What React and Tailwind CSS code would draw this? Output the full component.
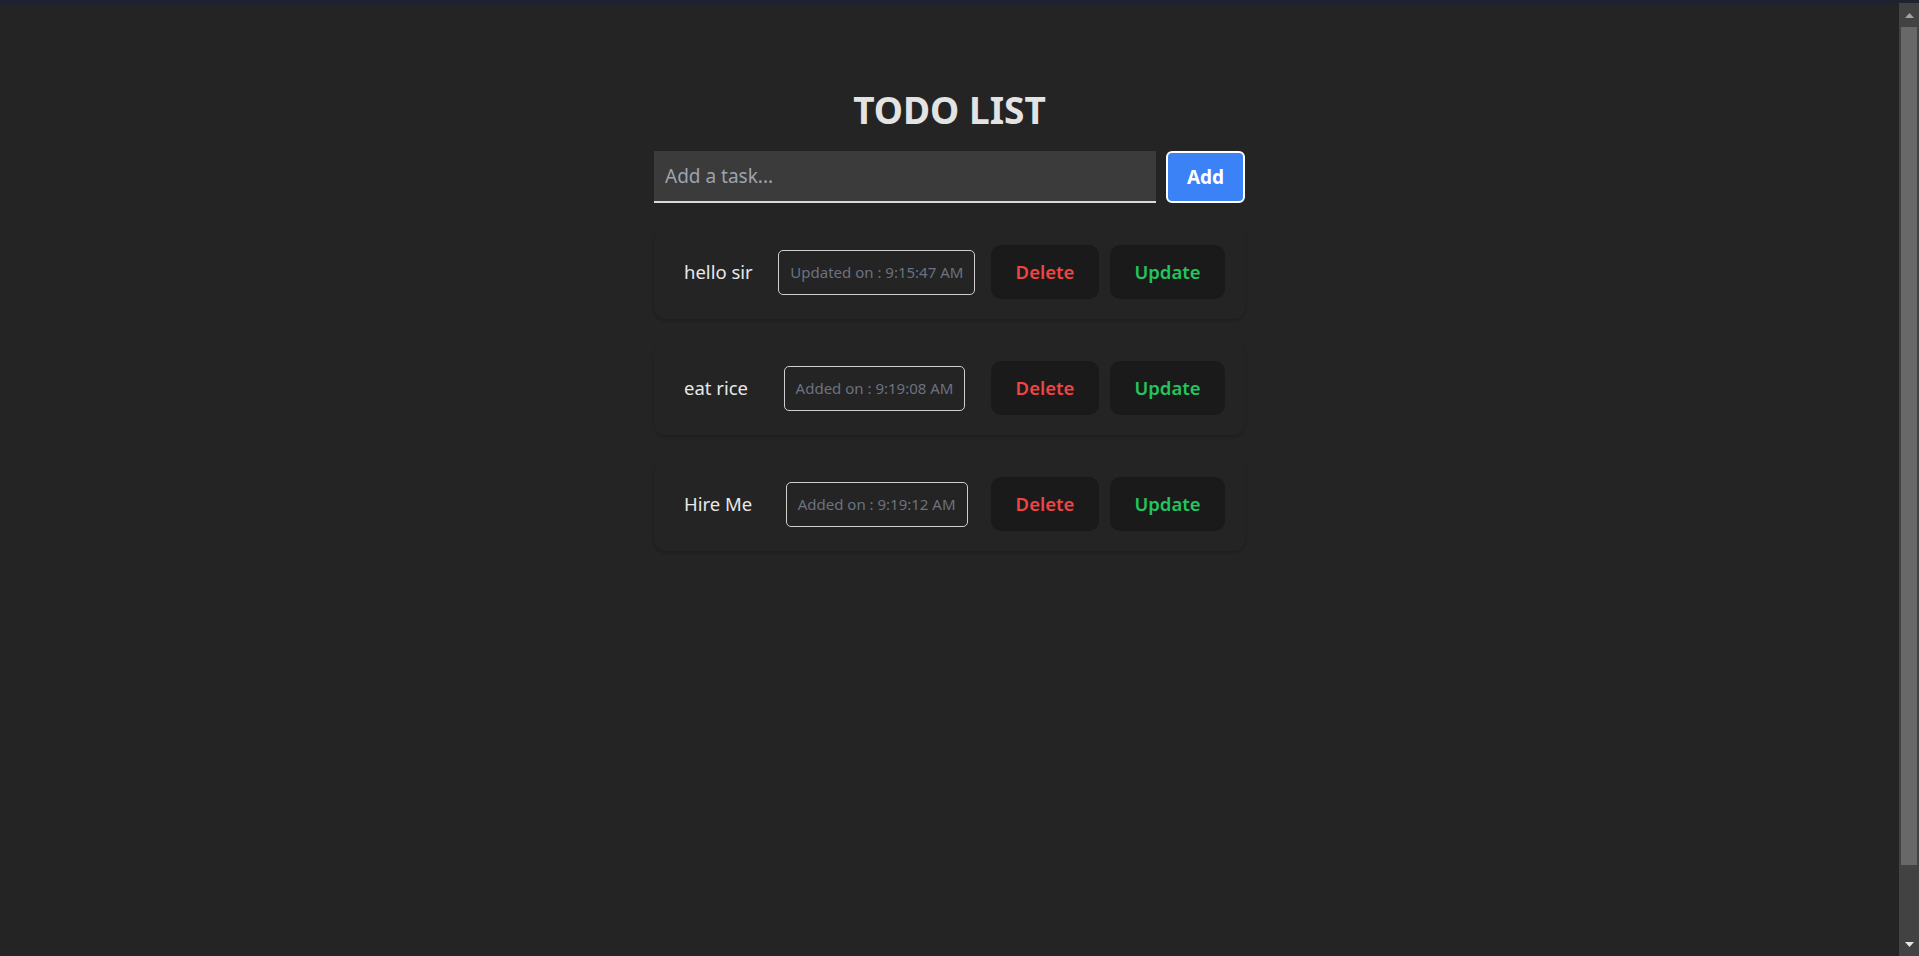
const todos = [
  { id: 1, text: "hello sir", label: "Updated on", time: "9:15:47 AM" },
  { id: 2, text: "eat rice", label: "Added on", time: "9:19:08 AM" },
  { id: 3, text: "Hire Me", label: "Added on", time: "9:19:12 AM" },
];

function Scrollbar() {
  return (
    <aside className="flex w-[20px] shrink-0 flex-col">
      <div className="h-[3px] bg-[#1f2330]" />
      <div className="flex flex-1 flex-col bg-[#424242]">
        <div className="flex h-[24px] items-center justify-center">
          <svg width="9" height="5" viewBox="0 0 9 5">
            <polygon points="4.5,0 9,5 0,5" fill="#a3a3a3" />
          </svg>
        </div>
        <div className="mx-[2px] h-[838px] bg-[#686868]" />
        <div className="flex-1" />
        <div className="flex h-[24px] items-center justify-center">
          <svg width="9" height="5" viewBox="0 0 9 5">
            <polygon points="0,0 9,0 4.5,5" fill="#e6e6e6" />
          </svg>
        </div>
      </div>
    </aside>
  );
}

function TodoItem({ todo }) {
  return (
    <li className="flex items-center justify-between rounded-xl bg-[#242424] px-5 py-5 shadow-[0_2px_3px_rgba(0,0,0,0.18)]">
      <span className="px-2.5 text-[18.5px] text-[#e8e8e8]">{todo.text}</span>
      <span className="flex h-[45px] items-center rounded-[5px] border border-[#cfcfcf] px-[11px] text-[15px] text-[#6b7280]">
        {todo.label} : {todo.time}
      </span>
      <div className="flex gap-[11px]">
        <button className="h-[54px] w-[108px] rounded-[10px] bg-[#1a1a1a] text-[18.5px] font-semibold text-[#ef4444]">
          Delete
        </button>
        <button className="h-[54px] w-[115px] rounded-[10px] bg-[#1a1a1a] text-[18.5px] font-semibold text-[#22c55e]">
          Update
        </button>
      </div>
    </li>
  );
}

export default function App() {
  return (
    <div className="flex h-screen overflow-hidden bg-[#242424] font-['Noto_Sans',sans-serif]">
      <main className="flex flex-1 flex-col">
        <div className="h-[5px] bg-[#1f2330]" />
        <div className="mx-auto mt-[83px] w-[591px]">
          <h1 className="text-center text-[37px] font-bold leading-[44px] text-[#e3e3e3]">
            TODO LIST
          </h1>
          <form className="mt-[19px] flex gap-[10px]" onSubmit={(e) => e.preventDefault()}>
            <input
              type="text"
              placeholder="Add a task..."
              className="h-[52px] flex-1 border-b-2 border-[#d9d9d9] bg-[#3b3b3b] px-[11px] text-[19px] text-white outline-none placeholder:text-[#9ca3af]"
            />
            <button
              type="submit"
              className="h-[52px] w-[79px] rounded-md border-2 border-white bg-[#3b82f6] text-[19px] font-bold text-white"
            >
              Add
            </button>
          </form>
          <ul className="mt-[22px] flex flex-col gap-[22px]">
            {todos.map((t) => (
              <TodoItem key={t.id} todo={t} />
            ))}
          </ul>
        </div>
      </main>
      <Scrollbar />
    </div>
  );
}
